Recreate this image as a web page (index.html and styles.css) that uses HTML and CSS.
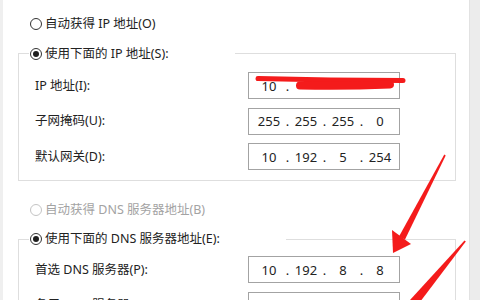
FILE: index.html
```html
<!DOCTYPE html>
<html lang="zh-CN">
<head>
<meta charset="utf-8">
<title>IP 设置</title>
<link rel="stylesheet" href="styles.css">
</head>
<body>
<div class="window">
  <div class="edge-left"></div>
  <div class="panel">
    <div class="radio-row">
      <span class="radio"></span><span class="txt">自动获得 IP 地址(O)</span>
    </div>
    <fieldset class="group group-ip">
      <legend class="legend"><span class="radio checked"></span><span class="txt">使用下面的 IP 地址(S):</span></legend>
      <div class="rows rows-ip">
        <div class="label">IP 地址(I):</div>
        <div class="ipbox"><span class="oct">10</span><span class="dot">.</span><span class="oct"></span><span class="dot"></span><span class="oct"></span><span class="dot"></span><span class="oct"></span></div>
        <div class="label">子网掩码(U):</div>
        <div class="ipbox"><span class="oct">255</span><span class="dot">.</span><span class="oct">255</span><span class="dot">.</span><span class="oct">255</span><span class="dot">.</span><span class="oct">0</span></div>
        <div class="label">默认网关(D):</div>
        <div class="ipbox"><span class="oct">10</span><span class="dot">.</span><span class="oct">192</span><span class="dot">.</span><span class="oct">5</span><span class="dot">.</span><span class="oct">254</span></div>
      </div>
    </fieldset>
    <div class="radio-row disabled">
      <span class="radio"></span><span class="txt">自动获得 DNS 服务器地址(B)</span>
    </div>
    <fieldset class="group group-dns">
      <legend class="legend"><span class="radio checked"></span><span class="txt">使用下面的 DNS 服务器地址(E):</span></legend>
      <div class="rows rows-dns">
        <div class="label">首选 DNS 服务器(P):</div>
        <div class="ipbox"><span class="oct">10</span><span class="dot">.</span><span class="oct">192</span><span class="dot">.</span><span class="oct">8</span><span class="dot">.</span><span class="oct">8</span></div>
        <div class="label">备用 DNS 服务器(A):</div>
        <div class="ipbox"><span class="oct">10</span><span class="dot">.</span><span class="oct">192</span><span class="dot">.</span><span class="oct">8</span><span class="dot">.</span><span class="oct">20</span></div>
      </div>
    </fieldset>
  </div>
  <div class="edge-right"></div>
  <svg class="marks" width="480" height="300" viewBox="0 0 480 300" aria-hidden="true">
    <path class="scribble-thin" d="M258 78.5 Q 330 80.5 403 80.5"/>
    <path class="scribble-thick" d="M300 85.5 Q 345 86.5 390 84.5"/>
    <polygon class="red" points="444.3,154.6 445.7,155.4 405,239.6 399,236.4"/>
    <polygon class="red" points="392,230 411,244 393,253"/>
    <polygon class="red" points="464.5,240.5 465.8,241.5 421.5,300 410,300"/>
  </svg>
</div>
</body>
</html>
```

FILE: styles.css
```css
html, body {
  margin: 0;
  padding: 0;
  background: #ffffff;
}

body {
  width: 480px;
  height: 300px;
  overflow: hidden;
  font-family: "Noto Sans", "Noto Sans CJK SC", sans-serif;
  font-size: 12.5px;
  color: #222222;
}

.window {
  position: relative;
  display: flex;
  width: 480px;
  height: 300px;
  overflow: hidden;
}

.edge-left {
  width: 3px;
  flex: none;
  background: #efefef;
}

.edge-right {
  width: 10px;
  flex: none;
  background: #ececec;
  border-left: 1px solid #e2e2e2;
}

.panel {
  flex: 1;
  padding: 16px 13px 0 15px;
  min-width: 0;
}

.radio-row {
  display: flex;
  align-items: center;
  height: 16px;
  margin-left: 12px;
  gap: 3px;
  line-height: 16px;
  white-space: nowrap;
}

.radio-row.disabled {
  color: #a3a3a3;
  margin-top: 21.5px;
}

.radio {
  box-sizing: border-box;
  width: 12px;
  height: 12px;
  flex: none;
  border: 1px solid #333333;
  border-radius: 50%;
  background: #ffffff;
  display: flex;
  align-items: center;
  justify-content: center;
}

.radio.checked::after {
  content: "";
  width: 6px;
  height: 6px;
  border-radius: 50%;
  background: #1e1e1e;
}

.disabled .radio {
  border-color: #c4c4c4;
}

.group {
  margin: 0;
  padding: 0 0 9.5px 10px;
  border: 1px solid #dedede;
  min-width: 0;
}

.group-ip {
  margin-top: 13.5px;
}

.group-dns {
  margin-top: 13px;
}

.legend {
  display: flex;
  align-items: center;
  gap: 3px;
  height: 16px;
  line-height: 16px;
  padding: 0 66px 0 1px;
  white-space: nowrap;
}

.rows {
  display: grid;
  grid-template-columns: 213px 152px;
  row-gap: 8.5px;
  align-items: center;
  padding-left: 6px;
}

.rows-ip {
  padding-top: 10.5px;
}

.rows-dns {
  padding-top: 9px;
}

.label {
  white-space: nowrap;
  line-height: 16px;
}

.ipbox {
  box-sizing: border-box;
  height: 27px;
  border: 1px solid #a3a3a3;
  background: #ffffff;
  display: flex;
  align-items: center;
  padding-left: 2.5px;
  font-size: 13px;
  color: #222222;
}

.oct {
  width: 35px;
  flex: none;
  text-align: center;
}

.dot {
  width: 2px;
  flex: none;
  display: flex;
  justify-content: center;
  overflow: visible;
}

.marks {
  position: absolute;
  left: 0;
  top: 0;
  pointer-events: none;
}

.red {
  fill: #f41b1b;
}

.scribble-thin {
  fill: none;
  stroke: #f41b1b;
  stroke-width: 5;
  stroke-linecap: round;
}

.scribble-thick {
  fill: none;
  stroke: #f41b1b;
  stroke-width: 8;
  stroke-linecap: round;
}
```
